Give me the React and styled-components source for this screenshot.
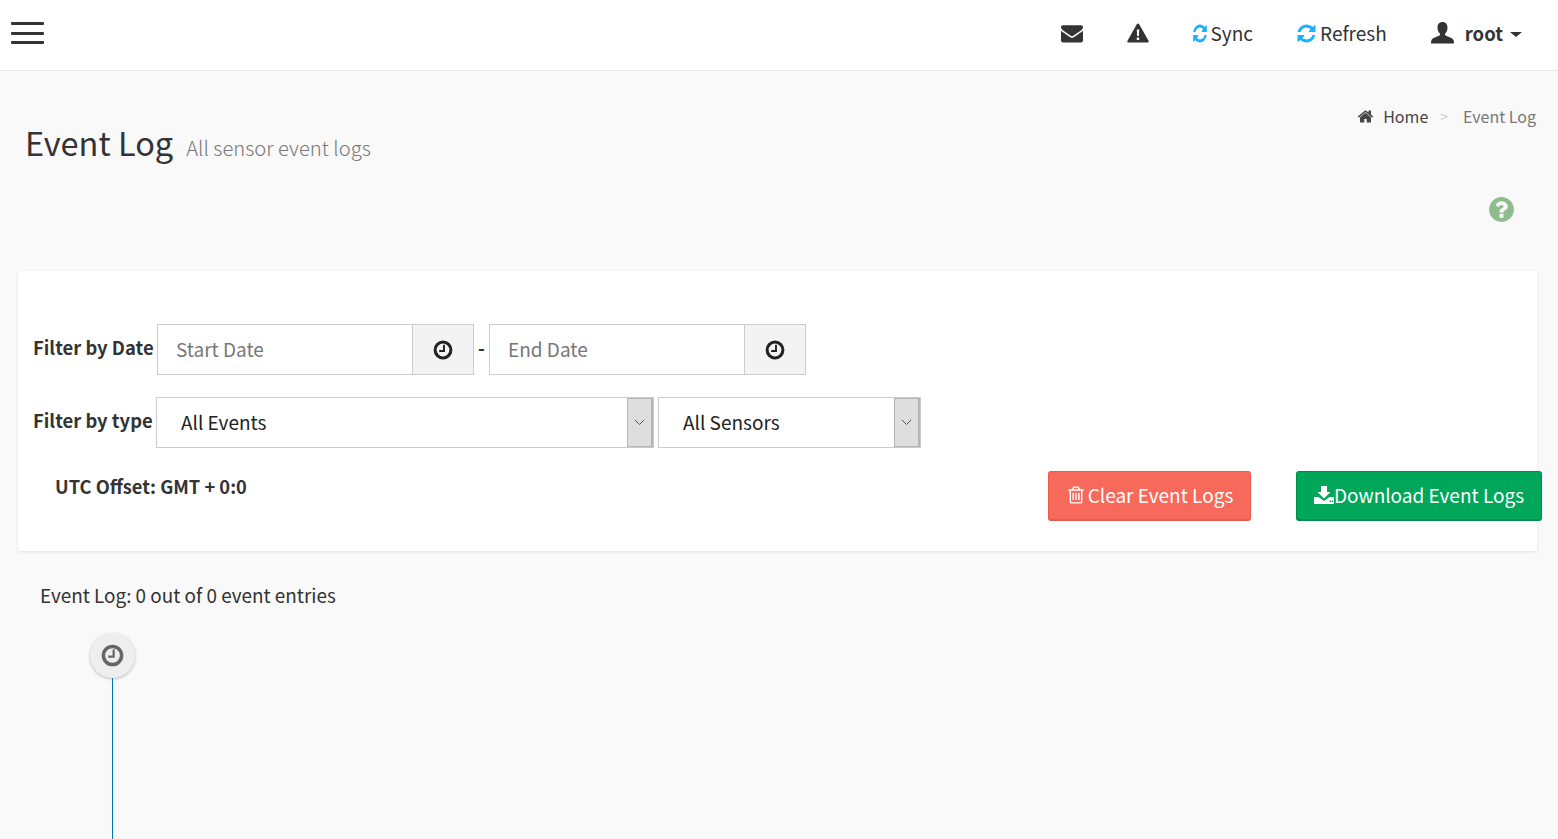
import styled, { createGlobalStyle } from 'styled-components';

const GlobalStyle = createGlobalStyle`
  html, body {
    margin: 0;
    padding: 0;
    height: 100%;
    overflow: hidden;
    background: #f9f9f9;
  }
  body {
    font-family: "Noto Sans CJK SC", "Noto Sans", sans-serif;
    color: #333;
  }
  * {
    box-sizing: border-box;
  }
`;

// font awesome 4 outlines, 1792 grid
const paths = {
  envelope: 'M1792 710v794q0 66-47 113t-113 47h-1472q-66 0-113-47t-47-113v-794q44 49 101 87 362 246 497 345 57 42 92.5 65.5t94.5 48 110 24.5h2q51 0 110-24.5t94.5-48 92.5-65.5q170-123 498-345 57-39 100-87zm0-294q0 79-49 151t-122 123q-376 261-468 325-10 7-42.5 30.5t-54 38-52 32.5-57.5 27-50 9h-2q-23 0-50-9t-57.5-27-52-32.5-54-38-42.5-30.5q-91-64-262-182.5t-205-142.5q-62-42-117-115.5t-55-136.5q0-78 41.5-130t118.5-52h1472q65 0 112.5 47t47.5 113z',
  refresh: 'M1639 1056q0 5-1 7-64 268-268 434.5t-478 166.5q-146 0-282.5-55t-243.5-157l-129 129q-19 19-45 19t-45-19-19-45v-448q0-26 19-45t45-19h448q26 0 45 19t19 45-19 45l-137 137q71 66 161 102t187 36q134 0 250-65t186-179q11-17 53-117 8-23 30-23h192q13 0 22.5 9.5t9.5 22.5zm25-800v448q0 26-19 45t-45 19h-448q-26 0-45-19t-19-45 19-45l138-138q-148-137-349-137-134 0-250 65t-186 179q-11 17-53 117-8 23-30 23h-199q-13 0-22.5-9.5t-9.5-22.5v-7q65-268 270-434.5t480-166.5q146 0 284 55.5t245 156.5l130-129q19-19 45-19t45 19 19 45z',
  home: 'M1472 992v480q0 26-19 45t-45 19h-384v-384h-256v384h-384q-26 0-45-19t-19-45v-480q0-1 .5-3t.5-3l575-474 575 474q1 2 1 6zm223-69l-62 74q-8 9-21 11h-3q-13 0-21-7l-692-577-692 577q-12 8-24 7-13-2-21-11l-62-74q-8-10-7-23.5t11-21.5l719-599q32-26 76-26t76 26l244 204v-195q0-14 9-23t23-9h192q14 0 23 9t9 23v408l219 182q10 8 11 21.5t-7 23.5z',
  question: 'M1024 1376v-192q0-14-9-23t-23-9h-192q-14 0-23 9t-9 23v192q0 14 9 23t23 9h192q14 0 23-9t9-23zm256-672q0-88-55.5-163t-138.5-116-170-41q-243 0-371 213-15 24 8 42l132 100q7 6 19 6 16 0 25-12 53-68 86-92 34-24 86-24 48 0 85.5 26t37.5 59q0 38-20 61t-68 45q-63 28-115.5 86.5t-52.5 125.5v36q0 14 9 23t23 9h192q14 0 23-9t9-23q0-19 21.5-49.5t54.5-49.5q32-18 49-28.5t46-35 44.5-48 28-60.5 12.5-81zm384 192q0 209-103 385.5t-279.5 279.5-385.5 103-385.5-103-279.5-279.5-103-385.5 103-385.5 279.5-279.5 385.5-103 385.5 103 279.5 279.5 103 385.5z',
  trash: 'M704 736v576q0 14-9 23t-23 9h-64q-14 0-23-9t-9-23v-576q0-14 9-23t23-9h64q14 0 23 9t9 23zm256 0v576q0 14-9 23t-23 9h-64q-14 0-23-9t-9-23v-576q0-14 9-23t23-9h64q14 0 23 9t9 23zm256 0v576q0 14-9 23t-23 9h-64q-14 0-23-9t-9-23v-576q0-14 9-23t23-9h64q14 0 23 9t9 23zm128 724v-948h-896v948q0 22 7 40.5t14.5 27 10.5 8.5h832q3 0 10.5-8.5t14.5-27 7-40.5zm-672-1076h448l-48-117q-7-9-17-11h-317q-10 2-17 11zm928 32v64q0 14-9 23t-23 9h-96v948q0 83-47 143.5t-113 60.5h-832q-66 0-113-58.5t-47-141.5v-952h-96q-14 0-23-9t-9-23v-64q0-14 9-23t23-9h309l70-167q15-37 54-63t79-26h320q40 0 79 26t54 63l70 167h309q14 0 23 9t9 23z',
};

const Fa = ({ name, size, color }) => (
  <svg width={size} height={size} viewBox="0 0 1792 1792" fill={color || 'currentColor'}>
    <path d={paths[name]} />
  </svg>
);

// the sync icon is the refresh glyph squeezed narrow
const SyncIcon = () => (
  <svg width="16" height="21" viewBox="0 0 1792 1792" preserveAspectRatio="none" fill="#1ab2ff">
    <path d={paths.refresh} />
  </svg>
);

const ClockIcon = ({ size }) => (
  <svg width={size} height={size} viewBox="0 0 20 20" fill="none" stroke="currentColor">
    <circle cx="10" cy="10" r="7.9" strokeWidth="3" />
    <path d="M11 4.8V11H6.2" strokeWidth="1.9" />
  </svg>
);

const WarningIcon = () => (
  <svg width="22" height="20" viewBox="0 0 22 20">
    <path
      fillRule="evenodd"
      fill="#333"
      d="M11 .5c.5 0 .9.3 1.2.8l9.3 16.4c.5 1 0 1.9-1.1 1.9H1.6C.5 19.6 0 18.7.5 17.7L9.8 1.3c.3-.5.7-.8 1.2-.8zM9.8 6.5l.3 6.6h1.8l.3-6.6zM9.8 14.5v2.6h2.4v-2.6z"
    />
  </svg>
);

const UserIcon = () => (
  <svg width="23" height="22" viewBox="0 0 23 22">
    <path
      fill="#333"
      d="M11.5 0c3 0 5 2.1 5 5.4 0 2.6-1.1 5-2.3 6.2-.5.6-.4 1.5.3 1.9 2.9 1.5 7 2.4 7.9 4.3.4 1 .6 2.3.6 3.7H0c0-1.4.2-2.7.6-3.7.9-1.9 5-2.8 7.900-4.300.7-.4.8-1.300.3-1.900C7.600 10.400 6.500 8 6.500 5.400c0-3.300 2-5.400 5-5.400z"
    />
  </svg>
);

const SaveIcon = () => (
  <svg width="20" height="18" viewBox="0 0 20 18">
    <path
      fillRule="evenodd"
      fill="#fff"
      d="M7 0h6v6h3.500L10 12.500 3.500 6H7zM0 11h4.500L10 15l5.500-4H20v7H0zM15.500 14.500v1.500h1.500v-1.500zM17.800 14.500v1.500h1.300v-1.500z"
    />
  </svg>
);

const Page = styled.div`
  height: 839px;
  display: flex;
  flex-direction: column;
  background: #f9f9f9;
  overflow: hidden;
`;

const Navbar = styled.header`
  flex: none;
  height: 71px;
  display: flex;
  align-items: center;
  justify-content: space-between;
  background: #fff;
  border-bottom: 1px solid #e9e9e9;
  padding: 0 0 4px 11px;
`;

const Burger = styled.button`
  width: 33px;
  height: 22px;
  padding: 0;
  border: 0;
  background: none;
  display: flex;
  flex-direction: column;
  justify-content: space-between;
  span {
    display: block;
    height: 3px;
    border-radius: 1px;
    background: #333;
  }
`;

const NavList = styled.nav`
  display: flex;
  align-items: center;
  padding-right: 36px;
`;

const NavItem = styled.a`
  display: flex;
  align-items: center;
  gap: ${(p) => p.$gap || 0}px;
  margin-left: ${(p) => p.$left}px;
  font-size: 19px;
  line-height: 28px;
  color: #333;
`;

const RootName = styled.span`
  font-weight: 700;
  font-size: 18.5px;
`;

const Caret = styled.span`
  width: 0;
  height: 0;
  margin-left: -4px;
  margin-top: 3px;
  border-top: 5px solid #333;
  border-left: 6px solid transparent;
  border-right: 6px solid transparent;
`;

const HeadRow = styled.section`
  flex: none;
  height: 200px;
  display: flex;
  justify-content: space-between;
  padding: 33px 22px 0 25px;
`;

const TitleBlock = styled.div`
  display: flex;
  align-items: baseline;
  gap: 13px;
  height: 48px;
  margin-top: 14px;
`;

const Title = styled.h1`
  margin: 0;
  font-size: 32.5px;
  line-height: 48px;
  font-weight: 400;
  color: #333;
`;

const Subtitle = styled.small`
  font-size: 20.2px;
  font-weight: 300;
  color: #777;
`;

const SideColumn = styled.div`
  display: flex;
  flex-direction: column;
  align-items: flex-end;
`;

const Breadcrumb = styled.ol`
  display: flex;
  align-items: center;
  margin: 0;
  padding: 0;
  list-style: none;
  font-size: 16px;
  line-height: 24px;
  color: #444;
`;

const Crumb = styled.li`
  display: flex;
  align-items: center;
  gap: 9px;
  color: ${(p) => (p.$current ? '#777' : '#444')};
`;

const CrumbSep = styled.li`
  margin: 0 15px 0 12px;
  font-size: 14px;
  color: #ccc;
`;

const HelpLink = styled.a`
  display: block;
  height: 28px;
  margin-top: 67px;
  margin-right: 20px;
`;

const Card = styled.section`
  flex: none;
  height: 280px;
  margin: 0 21px 0 18px;
  padding: 53px 0 0 15px;
  background: #fff;
  box-shadow: 0 1px 3px rgba(0, 0, 0, 0.1);
`;

const FilterRow = styled.div`
  display: flex;
  align-items: flex-start;
  margin-bottom: ${(p) => p.$bottom || 0}px;
`;

const FilterLabel = styled.label`
  font-size: 18.4px;
  line-height: 28px;
  font-weight: 700;
  color: #333;
  white-space: nowrap;
  width: ${(p) => p.$width}px;
  flex: none;
  padding-top: 9px;
`;

const InputGroup = styled.div`
  display: flex;
  width: 317px;
  height: 51px;
`;

const DateInput = styled.input`
  width: 255px;
  height: 51px;
  padding: 0 18px 2px;
  border: 1px solid #ccc;
  border-right: 0;
  background: #fff;
  font: inherit;
  font-size: 19px;
  color: #333;
  outline: none;
  &::placeholder {
    color: #777;
    opacity: 1;
  }
`;

const Addon = styled.span`
  width: 62px;
  display: flex;
  align-items: center;
  justify-content: center;
  border: 1px solid #ccc;
  background: #f3f3f3;
  color: #222;
`;

const Dash = styled.span`
  width: 15px;
  padding: 9px 0 0 4px;
  font-size: 18.5px;
  line-height: 28px;
  font-weight: 700;
`;

const Select = styled.div`
  display: flex;
  align-items: center;
  justify-content: space-between;
  width: ${(p) => p.$width}px;
  height: 51px;
  margin-right: ${(p) => p.$right || 0}px;
  padding-left: 24px;
  border: 1px solid #ccc;
  background: #fff;
  font-size: 19px;
  color: #222;
`;

const SelectValue = styled.span`
  margin-top: -2px;
`;

const SelectArrow = styled.span`
  width: 26px;
  height: 49px;
  display: flex;
  align-items: center;
  justify-content: center;
  border: 1px solid #b5b5b5;
  border-width: 1px 2px 1px 1px;
  background: #dedede;
`;

const BottomRow = styled.div`
  display: flex;
  align-items: flex-start;
`;

const UtcOffset = styled.div`
  flex: none;
  width: 1015px;
  padding: 1px 0 0 22px;
  font-size: 18.3px;
  line-height: 28px;
  font-weight: 700;
`;

const ActionButton = styled.button`
  display: flex;
  align-items: center;
  justify-content: center;
  gap: ${(p) => p.$gap}px;
  width: ${(p) => p.$width}px;
  height: 50px;
  margin-left: ${(p) => p.$left || 0}px;
  flex: none;
  padding: 0 0 2px;
  border: 1px solid ${(p) => p.$edge};
  border-bottom-width: 2px;
  border-radius: 3px;
  background: ${(p) => p.$fill};
  color: #fff;
  font: inherit;
  font-size: 19px;
`;

const EntriesCount = styled.p`
  flex: none;
  margin: 30px 0 0 40px;
  font-size: 18.9px;
  line-height: 28px;
  color: #333;
`;

const Timeline = styled.div`
  flex: 1;
  display: flex;
  flex-direction: column;
  align-items: center;
  width: 45px;
  margin: 24px 0 0 90px;
`;

const TimelineBadge = styled.span`
  flex: none;
  width: 45px;
  height: 45px;
  display: flex;
  align-items: center;
  justify-content: center;
  border-radius: 50%;
  background: #eee;
  color: #666;
  box-shadow: 0 1px 3px rgba(0, 0, 0, 0.25);
`;

const TimelineLine = styled.span`
  flex: 1;
  width: 1px;
  background: #0073b7;
`;

const ChevronDown = () => (
  <svg width="11" height="7" viewBox="0 0 11 7" fill="none" stroke="#555" strokeWidth="1">
    <path d="M.8 .8L5.5 5.5L10.2 .8" />
  </svg>
);

export default function App() {
  return (
    <Page>
      <GlobalStyle />
      <Navbar>
        <Burger aria-label="Toggle navigation">
          <span />
          <span />
          <span />
        </Burger>
        <NavList>
          <NavItem $left={0}>
            <Fa name="envelope" size={22} color="#333" />
          </NavItem>
          <NavItem $left={44}>
            <WarningIcon />
          </NavItem>
          <NavItem $left={43} $gap={3}>
            <SyncIcon />
            Sync
          </NavItem>
          <NavItem $left={43} $gap={3}>
            <Fa name="refresh" size={21} color="#1ab2ff" />
            Refresh
          </NavItem>
          <NavItem $left={44} $gap={11}>
            <UserIcon />
            <RootName>root</RootName>
            <Caret />
          </NavItem>
        </NavList>
      </Navbar>

      <HeadRow>
        <TitleBlock>
          <Title>Event Log</Title>
          <Subtitle>All sensor event logs</Subtitle>
        </TitleBlock>
        <SideColumn>
          <Breadcrumb>
            <Crumb>
              <Fa name="home" size={17} color="#444" />
              Home
            </Crumb>
            <CrumbSep>&gt;</CrumbSep>
            <Crumb $current>Event Log</Crumb>
          </Breadcrumb>
          <HelpLink>
            <Fa name="question" size={29} color="#8fbc8f" />
          </HelpLink>
        </SideColumn>
      </HeadRow>

      <Card>
        <FilterRow $bottom={22}>
          <FilterLabel $width={124}>Filter by Date</FilterLabel>
          <InputGroup>
            <DateInput placeholder="Start Date" />
            <Addon>
              <ClockIcon size={20} />
            </Addon>
          </InputGroup>
          <Dash>-</Dash>
          <InputGroup>
            <DateInput placeholder="End Date" />
            <Addon>
              <ClockIcon size={20} />
            </Addon>
          </InputGroup>
        </FilterRow>
        <FilterRow $bottom={23}>
          <FilterLabel $width={123}>Filter by type</FilterLabel>
          <Select $width={498} $right={4}>
            <SelectValue>All Events</SelectValue>
            <SelectArrow>
              <ChevronDown />
            </SelectArrow>
          </Select>
          <Select $width={263}>
            <SelectValue>All Sensors</SelectValue>
            <SelectArrow>
              <ChevronDown />
            </SelectArrow>
          </Select>
        </FilterRow>
        <BottomRow>
          <UtcOffset>UTC Offset: GMT + 0:0</UtcOffset>
          <ActionButton $width={203} $gap={2} $fill="#f7695a" $edge="#e85a4a">
            <Fa name="trash" size={20} color="#fff" />
            Clear Event Logs
          </ActionButton>
          <ActionButton $width={246} $left={45} $gap={0} $fill="#00a65a" $edge="#008d4c">
            <SaveIcon />
            Download Event Logs
          </ActionButton>
        </BottomRow>
      </Card>

      <EntriesCount>Event Log: 0 out of 0 event entries</EntriesCount>
      <Timeline>
        <TimelineBadge>
          <ClockIcon size={23} />
        </TimelineBadge>
        <TimelineLine />
      </Timeline>
    </Page>
  );
}
